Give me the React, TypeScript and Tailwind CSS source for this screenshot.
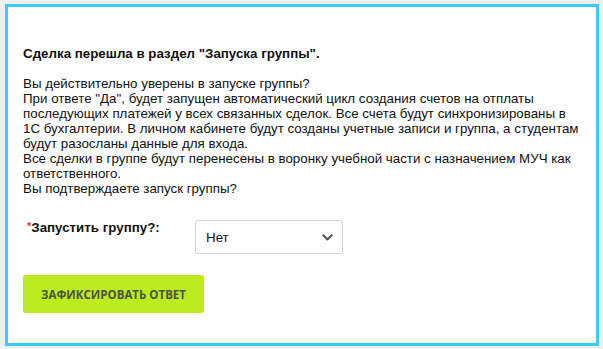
import React from 'react'

function Chevron() {
  return (
    <svg width="11" height="7" viewBox="0 0 11 7" fill="none">
      <path d="M1.3 1.3 5.5 5.5l4.2-4.2" stroke="#555" strokeWidth="2" strokeLinecap="round" strokeLinejoin="round" />
    </svg>
  )
}

export default function App() {
  return (
    <div className="h-[349px] w-[603px] bg-[#edf0f0] pl-[5px] pt-[4px]">
      <div
        className="h-[342px] w-[594px] border-[3px] border-[#3ccaf6] bg-white px-[15px] pt-[39px] text-[13.33px] leading-[15px] text-[#111]"
        style={{ fontFamily: '"Liberation Sans", Arial, sans-serif' }}
      >
        <div className="text-[13.33px] font-bold leading-[16px]">Сделка перешла в раздел "Запуска группы".</div>
        <div className="mt-[14px]">
          Вы действительно уверены в запуске группы?
          <br />
          При ответе "Да", будет запущен автоматический цикл создания счетов на отплаты последующих платежей у всех
          связанных сделок. Все счета будут синхронизированы в 1С бухгалтерии. В личном кабинете будут созданы учетные
          записи и группа, а студентам будут разосланы данные для входа.
          <br />
          Все сделки в группе будут перенесены в воронку учебной части с назначением МУЧ как ответственного.
          <br />
          Вы подтверждаете запуск группы?
        </div>

        <div className="mt-[24px] flex items-start">
          <div className="w-[172px] pl-[4px] font-bold">
            <span className="relative -top-[2px] text-[11px] text-[#e53935]">*</span>Запустить группу?:
          </div>
          <div className="flex h-[34px] w-[148px] items-center justify-between rounded-[2px] border border-[#d6d6d6] bg-white pl-[10px] pr-[9px]">
            <span>Нет</span>
            <Chevron />
          </div>
        </div>

        <button
          className="mt-[21px] flex h-[38px] w-[181px] items-center justify-center rounded-[3px] bg-[#bceb1f] text-[11.5px] font-bold uppercase text-[#4b5247]"
          style={{ fontFamily: '"Open Sans", sans-serif' }}
        >
          Зафиксировать ответ
        </button>
      </div>
    </div>
  )
}
